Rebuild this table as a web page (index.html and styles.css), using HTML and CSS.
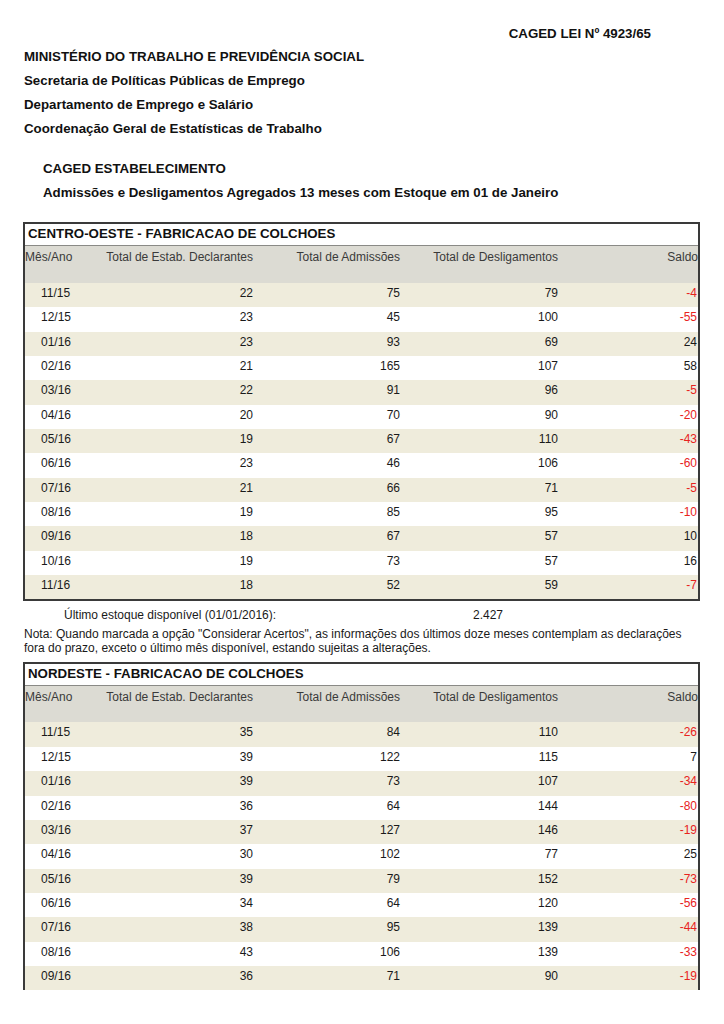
FILE: index.html
```html
<!DOCTYPE html>
<html lang="pt-BR">
<head>
<meta charset="utf-8">
<title>CAGED</title>
<link rel="stylesheet" href="styles.css">
</head>
<body>
<div class="page">
  <header class="doc-head">
    <div class="law">CAGED LEI Nº 4923/65</div>
    <div class="org">MINISTÉRIO DO TRABALHO E PREVIDÊNCIA SOCIAL</div>
    <div class="org">Secretaria de Políticas Públicas de Emprego</div>
    <div class="org">Departamento de Emprego e Salário</div>
    <div class="org">Coordenação Geral de Estatísticas de Trabalho</div>
    <div class="sub first">CAGED ESTABELECIMENTO</div>
    <div class="sub">Admissões e Desligamentos Agregados 13 meses com Estoque em 01 de Janeiro</div>
  </header>

  <section class="tbl">
    <div class="tbl-title">CENTRO-OESTE - FABRICACAO DE COLCHOES</div>
    <div class="row head">
      <span class="c1">Mês/Ano</span><span>Total de Estab. Declarantes</span><span>Total de Admissões</span><span>Total de Desligamentos</span><span class="c5">Saldo</span>
    </div>
    <div class="row odd"><span class="c1">11/15</span><span>22</span><span>75</span><span>79</span><span class="c5 neg">-4</span></div>
    <div class="row"><span class="c1">12/15</span><span>23</span><span>45</span><span>100</span><span class="c5 neg">-55</span></div>
    <div class="row odd"><span class="c1">01/16</span><span>23</span><span>93</span><span>69</span><span class="c5">24</span></div>
    <div class="row"><span class="c1">02/16</span><span>21</span><span>165</span><span>107</span><span class="c5">58</span></div>
    <div class="row odd"><span class="c1">03/16</span><span>22</span><span>91</span><span>96</span><span class="c5 neg">-5</span></div>
    <div class="row"><span class="c1">04/16</span><span>20</span><span>70</span><span>90</span><span class="c5 neg">-20</span></div>
    <div class="row odd"><span class="c1">05/16</span><span>19</span><span>67</span><span>110</span><span class="c5 neg">-43</span></div>
    <div class="row"><span class="c1">06/16</span><span>23</span><span>46</span><span>106</span><span class="c5 neg">-60</span></div>
    <div class="row odd"><span class="c1">07/16</span><span>21</span><span>66</span><span>71</span><span class="c5 neg">-5</span></div>
    <div class="row"><span class="c1">08/16</span><span>19</span><span>85</span><span>95</span><span class="c5 neg">-10</span></div>
    <div class="row odd"><span class="c1">09/16</span><span>18</span><span>67</span><span>57</span><span class="c5">10</span></div>
    <div class="row"><span class="c1">10/16</span><span>19</span><span>73</span><span>57</span><span class="c5">16</span></div>
    <div class="row odd"><span class="c1">11/16</span><span>18</span><span>52</span><span>59</span><span class="c5 neg">-7</span></div>
  </section>

  <div class="stock"><span class="stock-label">Último estoque disponível (01/01/2016):</span><span class="stock-val">2.427</span></div>
  <p class="note">Nota: Quando marcada a opção "Considerar Acertos", as informações dos últimos doze meses contemplam as declarações fora do prazo, exceto o último mês disponível, estando sujeitas a alterações.</p>

  <section class="tbl cut">
    <div class="tbl-title">NORDESTE - FABRICACAO DE COLCHOES</div>
    <div class="row head">
      <span class="c1">Mês/Ano</span><span>Total de Estab. Declarantes</span><span>Total de Admissões</span><span>Total de Desligamentos</span><span class="c5">Saldo</span>
    </div>
    <div class="row odd"><span class="c1">11/15</span><span>35</span><span>84</span><span>110</span><span class="c5 neg">-26</span></div>
    <div class="row"><span class="c1">12/15</span><span>39</span><span>122</span><span>115</span><span class="c5">7</span></div>
    <div class="row odd"><span class="c1">01/16</span><span>39</span><span>73</span><span>107</span><span class="c5 neg">-34</span></div>
    <div class="row"><span class="c1">02/16</span><span>36</span><span>64</span><span>144</span><span class="c5 neg">-80</span></div>
    <div class="row odd"><span class="c1">03/16</span><span>37</span><span>127</span><span>146</span><span class="c5 neg">-19</span></div>
    <div class="row"><span class="c1">04/16</span><span>30</span><span>102</span><span>77</span><span class="c5">25</span></div>
    <div class="row odd"><span class="c1">05/16</span><span>39</span><span>79</span><span>152</span><span class="c5 neg">-73</span></div>
    <div class="row"><span class="c1">06/16</span><span>34</span><span>64</span><span>120</span><span class="c5 neg">-56</span></div>
    <div class="row odd"><span class="c1">07/16</span><span>38</span><span>95</span><span>139</span><span class="c5 neg">-44</span></div>
    <div class="row"><span class="c1">08/16</span><span>43</span><span>106</span><span>139</span><span class="c5 neg">-33</span></div>
    <div class="row odd"><span class="c1">09/16</span><span>36</span><span>71</span><span>90</span><span class="c5 neg">-19</span></div>
  </section>
</div>
</body>
</html>
```

FILE: styles.css
```css
html, body {
  margin: 0;
  padding: 0;
  background: #ffffff;
}
body {
  font-family: "Liberation Sans", Arial, Helvetica, sans-serif;
  color: #1a1a1a;
  font-size: 12px;
}
.page {
  width: 724px;
  height: 990px;
  overflow: hidden;
  padding: 22px 0 0 0;
  box-sizing: border-box;
}
.doc-head {
  font-weight: bold;
  font-size: 13.3px;
  line-height: 24px;
  color: #111;
}
.law {
  text-align: right;
  padding-right: 73px;
  margin-bottom: -1px;
}
.org {
  padding-left: 24px;
}
.sub {
  padding-left: 43px;
}
.sub.first {
  margin-top: 16px;
}
.tbl {
  margin: 17px 24px 0 23px;
  border: 2px solid #3a3a3a;
}
.tbl.cut {
  border-bottom: none;
  margin-top: 7px;
}
.tbl-title {
  height: 19px;
  padding: 2px 3px 0 3px;
  line-height: 16px;
  font-weight: bold;
  font-size: 13.3px;
  color: #111;
  border-bottom: 1px solid #8a8a86;
}
.row {
  display: grid;
  grid-template-columns: 78px 150px 147px 158px 1fr;
  height: 24.35px;
  line-height: 21px;
  box-sizing: border-box;
  background: #ffffff;
  color: #1a1a1a;
}
.row > span {
  text-align: right;
  white-space: nowrap;
}
.row > .c1 {
  text-align: left;
  padding-left: 16px;
}
.row > .c5 {
  padding-right: 1px;
}
.row.odd {
  background: #efecdc;
}
.row.head {
  height: 37px;
  padding-top: 2px;
  line-height: 18px;
  background: #dcdbd3;
  color: #3a3a3a;
}
.tbl.cut .row.head {
  height: 36px;
}
.row.head > .c1 {
  padding-left: 0;
}
.row.head > .c5 {
  padding-right: 0;
}
.neg {
  color: #e8231d;
}
.stock {
  display: flex;
  margin-top: 5px;
  line-height: 18px;
  height: 18px;
}
.stock-label {
  padding-left: 64px;
  width: 409px;
}
.note {
  margin: 3px 0 0 0;
  padding: 0 40px 0 24px;
  line-height: 14px;
}
```
